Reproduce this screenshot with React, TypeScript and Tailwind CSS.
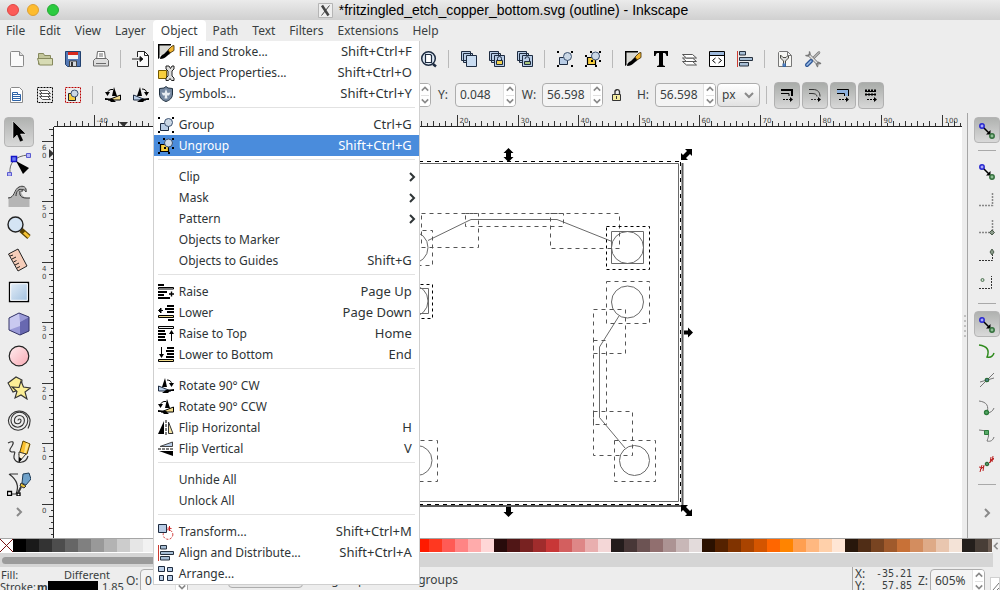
import type { ReactNode } from "react";
import clsx from "clsx";

const NAVY = "#1d2b40";
const BLUE = "#b9cde6";

// 16px icons, shared by the toolbars and the menu
const icons: Record<string, ReactNode> = {
  new: (
    <g fill="#fafafa" stroke="#8a8a8a">
      <path d="M2.500.5h8l4 4v10a1 1 0 0 1-1 1h-11a1 1 0 0 1-1-1v-13a1 1 0 0 1 1-1z" />
      <path d="M10.500.5v4h4" fill="#ddd" />
    </g>
  ),
  open: (
    <g stroke="#86895d">
      <path d="M1.500 13.500v-11h5l1 2h6v4" fill="#c3c69b" />
      <path d="M.5 7.500h15v6.500h-13z" fill="#d7dbb4" />
    </g>
  ),
  save: (
    <g>
      <path d="M.5.5h15v15h-13l-2-2z" fill="#5479b5" stroke="#21416f" />
      <path d="M3 1h10v7H3z" fill="#f4f4f4" />
      <path d="M3 1h10v3H3z" fill="#d8281c" />
      <path d="M4.500 10h7v5.500h-7z" fill="#d5d9df" stroke="#444" />
      <path d="M6 11h2v4H6z" fill="#333" />
    </g>
  ),
  print: (
    <g stroke="#6b6b6b">
      <path d="M4.500.5h7l1 8h-9z" fill="#fff" />
      <path d="M.5 9.500l2-2h11l2 2v5.500H.5z" fill="#dedede" />
      <path d="M6 3h4M6 5h4M3 12.500h10" />
    </g>
  ),
  import: (
    <g fill="none" stroke="#222">
      <path d="M4.500 6V.5h7l4 4v11h-11V10" fill="#fafafa" />
      <path d="M11.500.5v4h4M-1 8h10" />
      <path d="M7 5.500l3 2.500-3 2.500z" fill="#000" />
    </g>
  ),
  zoomPage: (
    <g fill="none" stroke={NAVY} strokeWidth="1.500">
      <circle cx="7.500" cy="7.500" r="6.800" fill="#dfe9f4" />
      <path d="M4.500 3.500h5l1 1v7h-6z" fill="#fff" strokeWidth="1.200" />
      <path d="M12 13l3 2.500" strokeWidth="2.500" />
    </g>
  ),
  duplicate: (
    <g fill={BLUE} stroke={NAVY}>
      <path d="M.5.5h9v9h-9zM2.500 2.500h9v9h-9z" />
      <path d="M5.500 4.500h10v11h-10z" fill="#c9dcf1" />
    </g>
  ),
  clone: (
    <g fill={BLUE} stroke={NAVY}>
      <path d="M.5.5h9v9h-9zM2.500 2.500h9v9h-9z" />
      <path d="M5.500 4.500h10v11h-10z" />
      <path d="M8.500 9V7.500a2 2 0 0 1 4 0V9" fill="none" />
      <path d="M7.500 9.500h6v4h-6z" fill="#f4d44c" />
    </g>
  ),
  unlink: (
    <g fill={BLUE} stroke={NAVY}>
      <path d="M.5.5h9v9h-9zM2.500 2.500h9v9h-9z" />
      <path d="M5.500 4.500h10v11h-10z" />
      <path d="M8 8a2.200 2.200 0 0 1 4.500 0v2" fill="none" />
      <path d="M7.500 10.500h6v3h-6z" fill="#a8c47a" />
    </g>
  ),
  group: (
    <g>
      <path d="M2.500 6.500h8v7h-8z" fill={BLUE} stroke={NAVY} />
      <circle cx="10.500" cy="5.500" r="4" fill="#cbd8e6" stroke="#3c5170" />
      <path d="M0 0h2v2H0zM14 0h2v2h-2zM0 14h2v2H0zM14 14h2v2h-2z" />
    </g>
  ),
  ungroup: (
    <g>
      <path d="M2.500 6.500h8v7h-8z" fill="#f7ce3e" stroke="#000" strokeWidth="1.200" />
      <circle cx="10.500" cy="5" r="4" fill="#cbd8e6" stroke="#3c5170" />
      <path d="M0 4h2v2H0zM5 0h2v2H5zM14 0h2v2h-2zM0 14h2v2H0zM10 14h2v2h-2zM14 9h2v2h-2zM6 9h2v2H6z" />
    </g>
  ),
  fill: (
    <g>
      <path d="M1 1h11v10H1z" fill="#d9d9d4" />
      <path d="M0 0h13v1.500H1.500V14L0 15z" />
      <path d="M2 15c0-3 2-4 4-5l4-4 3 2.500-4 3.500c-2 2-4 3-7 3z" />
      <path d="M10 6l4-4 2-.5v5L12 9z" fill="#f2b632" stroke="#382600" strokeWidth=".8" />
    </g>
  ),
  text: <path d="M1 0h14v5h-1.500C13 2.500 12.500 2 10 2v11c0 1.500.5 1.800 2 2v1H4v-1c1.500-.2 2-.5 2-2V2c-2.500 0-3 .5-3.500 3H1z" />,
  layers: (
    <g fill="#fff" stroke="#555">
      <path d="M1.500 10.500h10l4 3.500h-10z" />
      <path d="M1.500 7h10l4 3.500h-10z" />
      <path d="M1.500 3.500h10l4 3.500h-10z" />
    </g>
  ),
  xml: (
    <g fill="none" stroke="#000">
      <path d="M.5.5h15v15H.5z" fill="#fff" />
      <path d="M1 1h14v3H1z" fill="#9db9dc" stroke="none" />
      <path d="M1 4.500h14M6.500 7L3.500 9.500l3 2.500M9.500 7l3 2.500-3 2.500" />
    </g>
  ),
  align: (
    <g fill="#a7bed5" stroke="#26313e">
      <path d="M.5 0v16" stroke="#cc3b30" />
      <path d="M2.500.5h6v3.500h-6zM2.500 6.500h13v3h-13zM2.500 11.500h9v3.500h-9z" />
    </g>
  ),
  docPrefs: (
    <g fill="none" stroke="#777">
      <path d="M2.500.5h8l4 4v11h-13V1.500z" fill="#f7f7f4" />
      <path d="M3.500 4v3l3 3v5h2v-5l3-3V4l-2.500 2.500h-3z" fill="#ddd" stroke="#4c4c44" />
      <path d="M6 12.500v3h2.500v-3" stroke="#3465a4" fill="#5b86c0" />
      <path d="M10.500.5v4h4" />
    </g>
  ),
  prefs: (
    <g strokeLinecap="round" fill="none">
      <path d="M14 1.500L6 9.500" stroke="#777" strokeWidth="2.500" />
      <path d="M14 1.500L6 9.500" stroke="#e4e4e4" />
      <path d="M4 4l9 9" stroke="#777" strokeWidth="3" />
      <path d="M4 4l9 9" stroke="#e4e4e4" strokeWidth="1.500" />
      <path d="M1 4.500l2 .5 2-2-.5-2M15.500 12.500l-2-1-2 2 1 2" stroke="#777" strokeWidth="1.500" />
      <path d="M6 10l-4 4" stroke="#2c5596" strokeWidth="4" />
      <path d="M6 10l-4 4" stroke="#9fc0ea" strokeWidth="1.500" />
    </g>
  ),
  pageText: (
    <g fill="none" stroke="#8a8a8a">
      <path d="M2.500.5h8l3 3v12h-12v-14z" fill="#fff" />
      <path d="M3.500 5.500h5v2h3v6h-8zM3.500 7.500h5M3.500 9.500h8M3.500 11.500h8" stroke="#2d63a8" />
    </g>
  ),
  selLayers: (
    <g fill="none" stroke="#000">
      <path d="M.5.5h15v15H.5z" strokeDasharray="2 1" />
      <g fill="#fff" stroke="#555">
        <path d="M2.500 9.500h8l3 3h-8z" />
        <path d="M2.500 6.500h8l3 3h-8z" />
        <path d="M2.500 3.500h8l3 3h-8z" />
      </g>
    </g>
  ),
  selShapes: (
    <g fill="none">
      <path d="M.5.5h15v15H.5z" stroke="#b00" strokeDasharray="2 1" />
      <path d="M3.500 6.500h7v7h-7z" fill="#f7ce3e" stroke="#222" />
      <circle cx="9.500" cy="6.500" r="3.500" fill="#cbd8e6" stroke="#3c5170" />
    </g>
  ),
  rotCcw: (
    <g>
      <path d="M9 0l3 9H7z" />
      <path d="M15.500 8v5H3z" fill="#f1dc8e" stroke="#000" />
      <path d="M0 11l8 1 3 3H6l-2-2H0z" />
      <path d="M8 2.500C5 2 3 3.500 2.500 6" fill="none" stroke="#000" />
      <path d="M0 5h5L2.500 9z" />
    </g>
  ),
  rotCw: (
    <g>
      <path d="M7 0L4 9h5z" />
      <path d="M.5 8v5H13z" fill={BLUE} stroke={NAVY} />
      <path d="M16 11l-8 1-4 3h6l2-2h4z" />
      <path d="M9 2c3 0 4.500 1.500 4.500 4" fill="none" stroke="#000" />
      <path d="M11 5h5l-2.500 4z" />
    </g>
  ),
  flipH: (
    <g>
      <path d="M6 1v13H0z" />
      <path d="M8 0v15" stroke="#000" strokeDasharray="3 1" />
      <path d="M10.500 2v11.500h4.500z" fill="#f3e3a5" stroke="#333" />
    </g>
  ),
  flipV: (
    <g>
      <path d="M14.500 1v4.500H2z" fill={BLUE} stroke="#444" />
      <path d="M0 8h16" stroke="#000" strokeDasharray="3 1" />
      <path d="M15 10v5L1 10z" />
    </g>
  ),
  objProps: (
    <g>
      <path d="M.5 5.500h8v8h-8z" fill="#f7ce3e" stroke="#735800" />
      <path d="M8 1v3l2 2v5l-2 2v2.500h2.500l1.500-2 1.500 2H16V13l-2-2V6l2-2V1h-2l-1.500 2.500L11 1z" fill="#ddd" stroke="#222" />
    </g>
  ),
  symbols: (
    <g>
      <path d="M8 .5l2 1.500 4.500.5V8c0 4-3 6.500-6.500 7.500C4.500 14.500 1.500 12 1.500 8V2.500L6 2z" fill="#7487a0" stroke="#20303f" />
      <path d="M8 3l1.500 4 3-.5-1.500 3H9l.5 3h-3l.5-3H5l-1.500-3 3 .5z" fill="#e8edf2" />
    </g>
  ),
  raise: (
    <g>
      <path d="M0 0h6v2H0zM0 7h9v2H0zM0 10h6v2H0zM0 13h12v2H0z" />
      <path d="M.5 3.500h15V5H.5z" fill="#eee" stroke="#000" />
      <path d="M11 10h5M13.500 7.500v5" stroke="#000" strokeWidth="1.400" />
    </g>
  ),
  lower: (
    <g>
      <path d="M9 0h7v2H9zM7 3h9v2H7zM9 6h7v2H9zM10 14h6v2h-6z" />
      <path d="M.5 10.500h15v2H.5z" fill="#f1dc8e" stroke="#000" />
      <path d="M5 5.500H1M3 3L.5 5.500 3 8z" stroke="#000" />
    </g>
  ),
  raiseTop: (
    <g>
      <path d="M.5.5h15v2H.5z" fill="#eee" stroke="#000" />
      <path d="M0 4h7v2H0zM0 7h8v2H0zM0 10h7v2H0zM0 13h8v2H0z" />
      <path d="M13.500 15V5" stroke="#000" />
      <path d="M11 8l2.500-4L16 8z" />
    </g>
  ),
  lowerBottom: (
    <g>
      <path d="M9 0h7v2H9zM8 3h8v2H8zM9 6h7v2H9zM8 9h8v2H8z" />
      <path d="M.5 12.500h15v2H.5z" fill="#f1dc8e" stroke="#000" />
      <path d="M3.500 0v9" stroke="#000" />
      <path d="M1 7l2.500 4L6 7z" />
    </g>
  ),
  transform: (
    <g fill="none">
      <circle cx="10" cy="10.500" r="4.800" stroke="#c22" strokeDasharray="2 1.500" />
      <path d="M.5.5h8v8h-8z" fill={BLUE} stroke={NAVY} />
      <path d="M11.500 2v5M9.500 4l4 .5" stroke="#c22" />
    </g>
  ),
  arrange: (
    <g fill={BLUE} stroke={NAVY}>
      <path d="M.5.5h6v5h-6zM9.500 1.500h5v4h-5zM1.500 9.500h4v5h-4zM9.500 9.500h5v5h-5z" />
    </g>
  ),
  undo: <path d="M14 13c0-6-4-8-9-7V2L0 8l5 5V9c4-1 7 0 9 4z" fill="#e8c33a" stroke="#6b5310" />,
  redo: <path d="M2 13c0-6 4-8 9-7V2l5 6-5 5V9c-4-1-7 0-9 4z" fill="#8fc04a" stroke="#3f6212" />,
  affectStroke: (
    <g fill="none" stroke="#000">
      <path d="M2 3h11v6" strokeWidth="2" />
      <path d="M2 6.500h8V9" />
      <path d="M4 12.500h7" strokeDasharray="2 1" />
      <path d="M11 10l3 2.500-3 2.500z" fill="#000" stroke="none" />
    </g>
  ),
  affectCorner: (
    <g fill="none" stroke="#333">
      <path d="M2 2.500h4c5 0 7 3 7 7M2 6.500h3c3 0 5 1 5 3" />
      <path d="M4 12.500h7" strokeDasharray="2 1" />
      <path d="M11 10l3 2.500-3 2.500z" fill="#000" stroke="none" />
    </g>
  ),
  affectGradient: (
    <g fill="none" stroke="#000">
      <path d="M2 3h11v6h-3V6H2z" fill="#8eb2df" stroke="none" />
      <path d="M2 2.500h11.500V9M2 6.500h7.500V9" />
      <path d="M4 12.500h7" strokeDasharray="2 1" />
      <path d="M11 10l3 2.500-3 2.500z" fill="#000" stroke="none" />
    </g>
  ),
  affectPattern: (
    <g fill="none" stroke="#000">
      <path d="M2 3.500h12M2 7.500h12" strokeWidth="2" strokeDasharray="2 1" />
      <path d="M2 4.500h11M2 7.500h11" />
      <path d="M4 12.500h7" strokeDasharray="2 1" />
      <path d="M11 10l3 2.500-3 2.500z" fill="#000" stroke="none" />
    </g>
  ),
  lock: (
    <g stroke="#333">
      <path d="M6 7V5.500a2 2 0 0 1 4.500-1V7" fill="none" strokeWidth="1.300" />
      <path d="M3.500 7.500h8v6h-8z" fill="#f3eba0" />
      <path d="M7.500 9v3" />
    </g>
  ),
  // snapping
  snap: (
    <g>
      <path d="M4 5l6 6" stroke="#000" strokeWidth="1.500" />
      <path d="M11.500 8v4.500H7z" />
      <circle cx="3" cy="4" r="2.200" fill="#a9a9f8" stroke="#2929cf" strokeWidth="1.500" />
      <circle cx="13" cy="14" r="2.200" fill="#8fbf95" stroke="#33703c" strokeWidth="1.500" />
    </g>
  ),
  snapEdge: <path d="M0 14.500h13.500V1" fill="none" stroke="#888" strokeWidth="1.500" strokeDasharray="2 1" />,
  snapCorner: (
    <g>
      <path d="M0 13.500h13.500V0" fill="none" stroke="#888" strokeWidth="1.500" strokeDasharray="2 1" />
      <path d="M13 11l2.500 2.500L13 16l-2.500-2.500z" fill="#8a9a8a" stroke="#4c5d4c" />
    </g>
  ),
  snapMid: (
    <g>
      <path d="M0 13.500h13.500V3" fill="none" stroke="#333" strokeDasharray="2 1" />
      <path d="M13 2l2 3-2 3-2-3z" fill="#8a9a8a" stroke="#4c5d4c" />
    </g>
  ),
  snapCenter: (
    <g>
      <path d="M0 13.500h12.500V1" fill="none" stroke="#333" strokeDasharray="2 1" />
      <circle cx="3.500" cy="5" r="1.500" fill="#cde0cf" stroke="#4c6d50" />
    </g>
  ),
  snapPath: <path d="M0 1c8 1 11 5 8 12 4 1 6-1 7-4" fill="none" stroke="#2e8a1c" strokeWidth="1.500" />,
  snapCross: (
    <g fill="none" stroke="#777">
      <path d="M1 15L15 1M1 10l14-4" />
      <circle cx="8" cy="8" r="1.700" fill="#4f83a0" stroke="#2b6b35" strokeWidth="1.300" />
    </g>
  ),
  snapCusp: (
    <g fill="none" stroke="#777">
      <path d="M0 1c8 1 10 5 8 12 3 0 6-2 7-5" />
      <circle cx="7.500" cy="12.500" r="2" fill="#58a868" stroke="#2b7b3a" strokeWidth="1.300" />
    </g>
  ),
  snapSmooth: (
    <g fill="none" stroke="#777">
      <path d="M0 2l8 1c3 3 1 7 0 10 4 1 6-1 7-4" />
      <path d="M5.500 2.500h4v4h-4z" fill="#58a868" stroke="#2b7b3a" />
    </g>
  ),
  snapLine: (
    <g fill="none" stroke="#b22">
      <path d="M0 11l5 1M1 14l4-4M3 9l-2 7M5 9l-1 6M11 4l4-1M10 7l5-5M12 1l-1 6M14 0l-1 6" />
      <circle cx="8" cy="8" r="1.800" fill="#4f9060" stroke="#1f5b2a" />
    </g>
  ),
};

// 24px icons of the toolbox
const toolIcons: Record<string, ReactNode> = {
  Select: <path d="M6 1v18l4-4 3 7 3.500-1.500-3-6.500H19z" stroke="#fff" strokeWidth=".5" />,
  Node: (
    <g>
      <path d="M3 21C2 11 8 4 21 3" fill="none" stroke="#666" />
      <path d="M4.500 4.500h5v5h-5z" fill="#6b7cf0" stroke="#1515c8" strokeWidth="1.500" />
      <path d="M19.500 1.500h4v4h-4zM.5 20.500h4v3.500h-4z" fill="#b6b6f4" stroke="#5b5bd0" />
      <path d="M9 9l13 7-6 6z" />
    </g>
  ),
  Tweak: (
    <g fill="none" stroke="#333">
      <path d="M1.500 23v-9c7 0 6-9 11-11 4-1 7 1 7 4-2-2-6-1-5 2 1 3 3 5 8 5v9z" fill="#b5b5b5" stroke="none" />
      <path d="M1 14c7 0 6-9 11-11 4-2 8 0 7 5-1-3-5-3-4 0M9 12c0-5 3-8 7-6M23 14h-4c-5 0-7-3-6-7" />
    </g>
  ),
  Zoom: (
    <g>
      <path d="M14 14l8 7" stroke="#5b4300" strokeWidth="5" />
      <path d="M17 16.500l5 4.500" stroke="#f7c334" strokeWidth="3" />
      <circle cx="8.500" cy="8.500" r="7.500" fill="#d4e4f4" stroke="#222" strokeWidth="1.400" />
    </g>
  ),
  Measure: (
    <g stroke="#222">
      <path d="M1.500 6L11 1l9 17-9 5z" fill="#f6cdb9" />
      <path d="M3 8l3-1M5 11l4-2M6.500 14l3-1.500M8 17l4-2M10 20l3-1.500" />
    </g>
  ),
  Rectangle: (
    <g>
      <defs>
        <linearGradient id="rectFill" x1="0" y1="0" x2="1" y2="1">
          <stop offset="0" stopColor="#e6eff8" />
          <stop offset="1" stopColor="#9fbfdf" />
        </linearGradient>
      </defs>
      <path d="M2.500 2.500h19v19h-19z" fill="url(#rectFill)" stroke="#000" strokeWidth="1.300" />
      <path d="M3.700 3.700h16.600v16.600H3.700z" fill="none" stroke="#fff" />
    </g>
  ),
  "3D Box": (
    <g stroke="#333366">
      <path d="M2 6l10-5 10 4v14l-9 4-11-5z" fill="#9a9ad8" stroke="none" />
      <path d="M2 6l10-5 1 9 9-5v13l-9-4-11 4z" fill="#c9c9f0" stroke="none" />
      <path d="M13 10l9-5v14l-9 4z" fill="#6868b0" stroke="none" />
      <path d="M2 6l10-5 10 4v14l-9 4-11-5z" fill="none" />
    </g>
  ),
  Ellipse: (
    <g>
      <defs>
        <linearGradient id="ellipseFill" x1="0" y1="0" x2="1" y2="1">
          <stop offset="0" stopColor="#ffeef0" />
          <stop offset="1" stopColor="#f8aab4" />
        </linearGradient>
      </defs>
      <circle cx="12" cy="12" r="9.800" fill="url(#ellipseFill)" stroke="#222" strokeWidth="1.200" />
    </g>
  ),
  Star: (
    <g fill="#fbee96" stroke="#333" strokeWidth="1.100">
      <path d="M1 7l8-6 6 3-1 9-8 3z" />
      <path d="M14 5l2.500 6 7 1-5.500 4 2 7-6-4-6 3 2-6.500-5-4.500 7 .5z" />
    </g>
  ),
  Spiral: (
    <path
      d="M11 12.500a1.500 1.500 0 0 1 3 0a3.300 3.300 0 0 1-6.600 0a5 5 0 0 1 10 0a6.700 6.700 0 0 1-13.400 0a8.400 8.400 0 0 1 16.800 0a9.700 9.700 0 0 1-19.400 0a11 11 0 0 1 21.600-1c.5 4-.5 6-2 9"
      fill="none"
      stroke="#333"
      strokeWidth="1.100"
    />
  ),
  Pencil: (
    <g>
      <path d="M1 3c4-2 7-2 4 3-3 4-3 6 1 6 4-1 0 3 1 6 2 6 12 6 14-2" fill="none" stroke="#333" strokeWidth="1.200" />
      <path d="M16 1l7 3-3 10-8 1z" fill="#fbc02d" stroke="#5b4300" />
      <path d="M19 3l3 1-3 9h-2z" fill="#fde58a" />
      <path d="M12 12l7 2-7 8z" fill="#fff3d6" stroke="#333" />
      <path d="M12 17l3 2-3 3z" />
    </g>
  ),
  Bezier: (
    <g>
      <path d="M3 2h8M2 2c7 5 11 11 7 20H3" fill="none" stroke="#333" strokeWidth="1.200" />
      <path d="M.5 19.500h4v4h-4zM10 21h3v3h-3z" fill="#fff" stroke="#000" strokeWidth="1.300" />
      <path d="M16 2l6-1 2 6-5 6-4-2z" fill="#6fa1c9" stroke="#1f3d58" />
      <path d="M14 11l5 3-2 2-4-2z" fill="#e8c33a" stroke="#333" />
      <path d="M14 15l-3 6" stroke="#333" strokeWidth="2" />
    </g>
  ),
};

function Icon({ name }: { name: string }) {
  return (
    <svg width="16" height="16" viewBox="0 0 16 16" className="shrink-0 overflow-visible" aria-hidden="true">
      {icons[name]}
    </svg>
  );
}

function Chevron({ className, d }: { className?: string; d: string }) {
  return (
    <svg width="10" height="10" viewBox="0 0 10 10" className={clsx("shrink-0", className)} aria-hidden="true">
      <path d={d} fill="none" stroke="currentColor" strokeWidth="2" />
    </svg>
  );
}

const UP = "M1 7l4-4 4 4";
const DOWN = "M1 3l4 4 4-4";
const RIGHT = "M3 1l4 4-4 4";
const LEFT = "M7 1L3 5l4 4";

const menus = ["File", "Edit", "View", "Layer", "Object", "Path", "Text", "Filters", "Extensions", "Help"];

type Item = { label: string; icon?: string; keys?: string; sub?: boolean; active?: boolean };

const objectMenu: Item[][] = [
  [
    { label: "Fill and Stroke...", icon: "fill", keys: "Shift+Ctrl+F" },
    { label: "Object Properties...", icon: "objProps", keys: "Shift+Ctrl+O" },
    { label: "Symbols...", icon: "symbols", keys: "Shift+Ctrl+Y" },
  ],
  [
    { label: "Group", icon: "group", keys: "Ctrl+G" },
    { label: "Ungroup", icon: "ungroup", keys: "Shift+Ctrl+G", active: true },
  ],
  [
    { label: "Clip", sub: true },
    { label: "Mask", sub: true },
    { label: "Pattern", sub: true },
    { label: "Objects to Marker" },
    { label: "Objects to Guides", keys: "Shift+G" },
  ],
  [
    { label: "Raise", icon: "raise", keys: "Page Up" },
    { label: "Lower", icon: "lower", keys: "Page Down" },
    { label: "Raise to Top", icon: "raiseTop", keys: "Home" },
    { label: "Lower to Bottom", icon: "lowerBottom", keys: "End" },
  ],
  [
    { label: "Rotate 90° CW", icon: "rotCw" },
    { label: "Rotate 90° CCW", icon: "rotCcw" },
    { label: "Flip Horizontal", icon: "flipH", keys: "H" },
    { label: "Flip Vertical", icon: "flipV", keys: "V" },
  ],
  [{ label: "Unhide All" }, { label: "Unlock All" }],
  [
    { label: "Transform...", icon: "transform", keys: "Shift+Ctrl+M" },
    { label: "Align and Distribute...", icon: "align", keys: "Shift+Ctrl+A" },
    { label: "Arrange...", icon: "arrange" },
  ],
];

const commandBar = [
  ["new", "open", "save", "print"],
  ["import", "import"],
  ["undo", "redo"],
  ["duplicate", "clone", "unlink"],
  ["zoomPage", "zoomPage", "zoomPage"],
  ["duplicate", "clone", "unlink"],
  ["group", "ungroup"],
  ["fill", "text", "layers", "xml", "align"],
  ["docPrefs", "prefs"],
];

const selectBar = [
  ["pageText", "selLayers", "selShapes"],
  ["rotCcw", "rotCw", "flipH", "flipV"],
  ["lowerBottom", "lower", "raise", "raiseTop"],
];

const snapBar = [
  ["snap"],
  ["snap", "snapEdge", "snapCorner", "snapMid", "snapCenter"],
  ["snap", "snapPath", "snapCross", "snapCusp", "snapSmooth", "snapLine"],
];

const palette = [
  "#000000", "#1a1a1a", "#333333", "#4d4d4d", "#666666", "#808080", "#999999", "#b3b3b3", "#cccccc", "#e6e6e6",
  "#f2f2f2", "#f9f9f9", "#ffffff", "#800000", "#ff0000", "#808000", "#ffff00", "#008000", "#00ff00", "#008080",
  "#00ffff", "#000080", "#0000ff", "#800080", "#ff00ff", "#2b0000", "#550000", "#800000", "#aa0000", "#d40000",
  "#ff0000", "#ff1a00", "#ff3820", "#ff5b55", "#ff8484", "#ffabab", "#ffd7d7", "#280b0b", "#501616", "#782221",
  "#a02c2c", "#c83737", "#d35f5f", "#de8787", "#e9afaf", "#f4d7d7", "#241c1c", "#483737", "#6c5353", "#916f6f",
  "#ac9393", "#c8b7b7", "#e3dbdb", "#2b1100", "#552200", "#803300", "#aa4400", "#d45500", "#ff6600", "#ff8400",
  "#ff9f50", "#ffb880", "#ffd0aa", "#ffe6d5", "#28170b", "#502d16", "#784421", "#a05a2c", "#c87137", "#d38d5f",
  "#deaa87", "#e9c6af", "#f4e3d7", "#241f1c", "#483e37", "#6c5d53",
];

function ToolGroups({ groups }: { groups: string[][] }) {
  return groups.map((group, i) => (
    <div key={i} className="flex shrink-0 items-center">
      {i > 0 && <div className="mr-1.5 ml-[5px] h-[18px] w-px bg-[#b9b9b9]" />}
      {group.map((name, j) => (
        <button key={j} type="button" aria-label={name} className="flex h-7 w-7 items-center justify-center">
          <Icon name={name} />
        </button>
      ))}
    </div>
  ));
}

function Spin({ id, value, className }: { id: string; value: string; className: string }) {
  return (
    <div className={clsx("flex h-6 shrink-0 overflow-hidden rounded border border-[#adadad] bg-[#f4f4f4]", className)}>
      <input id={id} defaultValue={value} className="w-0 min-w-0 flex-1 bg-transparent pl-1 text-xs outline-none" />
      <div className="flex w-3 flex-col items-center border-l border-[#e2e2e2] bg-white text-[#8a8a8a]">
        <button type="button" aria-label="Increase" className="flex flex-1 items-center border-b border-[#e2e2e2]">
          <Chevron d={UP} className="w-2" />
        </button>
        <button type="button" aria-label="Decrease" className="flex flex-1 items-center">
          <Chevron d={DOWN} className="w-2" />
        </button>
      </div>
    </div>
  );
}

function ObjectMenu() {
  return (
    <div
      role="menu"
      className="absolute top-full left-0 z-50 w-[267px] border-r border-b border-l border-[#cfcfcf] bg-white text-[#2e3436]"
    >
      {objectMenu.map((section, i) => (
        <div key={i}>
          {i > 0 && (
            <div className="h-[10px] px-1 pt-[3px]">
              <div className="h-px bg-[#e2e2e2]" />
            </div>
          )}
          {section.map((item) => (
            <button
              key={item.label}
              type="button"
              role="menuitem"
              className={clsx(
                "flex h-[21px] w-full items-center pl-1 text-left text-xs",
                item.sub ? "pr-0.5" : "pr-[7px]",
                item.active && "bg-[#4a8cdc] text-white"
              )}
            >
              <span className="mr-[5px] w-4">{item.icon && <Icon name={item.icon} />}</span>
              <span className="flex-1">{item.label}</span>
              {item.keys && <span className="text-[13px]">{item.keys}</span>}
              {item.sub && <Chevron d={RIGHT} />}
            </button>
          ))}
        </div>
      ))}
    </div>
  );
}

const UNIT = 6.055; // pixels per document unit at 605%

function TopRuler() {
  const ticks = Array.from({ length: 150 }, (_, i) => i - 46);
  return (
    <svg className="h-[14px] w-full shrink-0 font-['DejaVu_Sans',sans-serif]" aria-hidden="true">
      {ticks.map((n) => {
        const x = Math.round(283 + n * UNIT) - 0.5;
        return (
          <g key={n}>
            <path d={`M${x} ${n % 10 === 0 ? 2 : n % 2 === 0 ? 8 : 10}V13`} stroke="#333" />
            {n % 10 === 0 && (
              <text x={x + 2} y="10" fontSize="7" fill="#444">
                {n}
              </text>
            )}
          </g>
        );
      })}
      <path d="M0 13.500H2000" stroke="#222" />
      <path d="M65 9h9l-4.500 5z" fill="#333" />
    </svg>
  );
}

function SideRuler() {
  const ticks = Array.from({ length: 69 }, (_, i) => i - 6);
  return (
    <svg className="w-[13px] flex-1 font-['DejaVu_Sans',sans-serif]" aria-hidden="true">
      {ticks.map((n) => {
        const y = Math.round(377 - n * UNIT) + 0.5;
        return (
          <g key={n}>
            <path d={`M${n % 10 === 0 ? 1 : n % 2 === 0 ? 8 : 10} ${y}H13`} stroke="#333" />
            {n % 10 === 0 &&
              String(n)
                .split("")
                .map((digit, i) => (
                  <text key={i} x="1" y={y + 8 + i * 8} fontSize="7" fill="#444">
                    {digit}
                  </text>
                ))}
          </g>
        );
      })}
      <path d="M12.500 0V2000" stroke="#222" />
      <path d="M8 22v9l5-4.500z" fill="#333" />
    </svg>
  );
}

// Bounding boxes of the selected traces and pads: x, y, width, height
const boxes = [
  [421.5, 213.5, 57, 34],
  [465.5, 213.5, 98, 13],
  [550.5, 213.5, 69, 35],
  [390.5, 230.5, 42, 35],
  [606.5, 281.5, 43, 42],
  [593.5, 309.5, 32, 44],
  [593.5, 340.5, 13, 84],
  [593.5, 411.5, 39, 44],
  [614.5, 440.5, 41, 41],
  [396.5, 440.5, 41, 41],
];

function Canvas() {
  return (
    <svg className="h-full w-full" aria-label="Drawing">
      <g transform="translate(-54 -127)" fill="none">
        <g stroke="#6a6a6a">
          <path d="M163.500 163.500H678.500V501.500H163.500z" />
          <path d="M428 240.500L471 219.500H557L612 241.500M619 316L599.500 347V417.500L625 448" />
          <path d="M611.500 231.500h32v32h-32zM396.500 288.500h32v25h-32z" />
          <circle cx="627.500" cy="247.500" r="16" />
          <circle cx="627.500" cy="302" r="16" />
          <circle cx="634.500" cy="460.500" r="15" />
          <circle cx="412" cy="247.500" r="16" />
          <circle cx="412" cy="301" r="16" />
          <circle cx="417" cy="460.500" r="15" />
        </g>
        <g stroke="#555" strokeDasharray="4 4">
          {boxes.map(([x, y, w, h], i) => (
            <rect key={i} x={x} y={y} width={w} height={h} />
          ))}
        </g>
        <g stroke="#000" strokeDasharray="3 3">
          <rect x="606.500" y="226.500" width="43" height="43" />
          <rect x="390.500" y="284.500" width="42" height="34" />
        </g>
        <path d="M682.500 163V506M164 506H683.500" stroke="#5c5c5c" strokeWidth="2" />
        <path d="M163 161.500H681" stroke="#000" strokeDasharray="4 4" />
        <path d="M680.500 162V504.500H163" stroke="#000" strokeDasharray="4 4" />
        <g fill="#000">
          <path d="M508.500 148l5 5h-2.500v4h2.500l-5 5-5-5h2.500v-4h-2.500z" />
          <path d="M692 149v7l-2-2-4 4 2 2h-7v-7l2 2 4-4-2-2z" />
          <path d="M693 332.500l-5 5v-3h-4v-4h4v-3z" />
          <path d="M508.500 517l-5-5h2.500v-5h5v5h2.500z" />
          <path d="M692 516h-7l2-2-4-4-2 2v-7h7l-2 2 4 4 2-2z" />
        </g>
      </g>
    </svg>
  );
}

export default function App() {
  return (
    <div className="flex h-screen flex-col overflow-hidden bg-[#ededed] font-['Noto_Sans',sans-serif] text-xs text-[#3a3f41]">
      <header className="flex h-5 shrink-0 items-center bg-linear-to-b from-[#ebebeb] to-[#d0d0d0]">
        <div className="flex w-[60px] gap-2 pl-[7px]">
          <button type="button" aria-label="Close" className="h-3 w-3 rounded-full border border-[#df4744] bg-[#fc5b57]" />
          <button type="button" aria-label="Minimize" className="h-3 w-3 rounded-full border border-[#dea034] bg-[#fdbc2e]" />
          <button type="button" aria-label="Zoom" className="h-3 w-3 rounded-full border border-[#27aa35] bg-[#2bcb3f]" />
        </div>
        <h1 className="flex flex-1 items-center justify-center gap-1.5 pr-[54px] font-['Liberation_Sans',sans-serif] text-sm text-black">
          <svg width="15" height="15" viewBox="0 0 15 15" aria-hidden="true">
            <path d="M.5.5h14v14H.5z" fill="#eee" stroke="#b5b5b5" />
            <path d="M4 2.500l6.500 10" stroke="#444" strokeWidth="2.500" />
            <path d="M11.500 2.500l-8 10" stroke="#444" />
          </svg>
          *fritzingled_etch_copper_bottom.svg (outline) - Inkscape
        </h1>
      </header>

      <nav className="-ml-px flex h-[21px] shrink-0">
        {menus.map((name) => (
          <div key={name} className="relative">
            <button
              type="button"
              className={clsx("h-full", name === "Object" ? "rounded-t bg-white px-2" : "px-[7px]")}
            >
              {name}
            </button>
            {name === "Object" && <ObjectMenu />}
          </div>
        ))}
      </nav>

      <div className="flex h-9 shrink-0 items-center pl-[3px]">
        <ToolGroups groups={commandBar} />
      </div>

      <div className="flex h-9 shrink-0 items-center pl-[3px]">
        <ToolGroups groups={selectBar} />
        <label htmlFor="x" className="w-[35px] pr-2 text-right">X:</label>
        <Spin id="x" value="0.048" className="w-[61px]" />
        <label htmlFor="y" className="w-6 text-center">Y:</label>
        <Spin id="y" value="0.048" className="w-[61px]" />
        <label htmlFor="w" className="w-[26px] text-center">W:</label>
        <Spin id="w" value="56.598" className="w-[61px]" />
        <button type="button" aria-label="Lock ratio" className="flex w-7 justify-center">
          <Icon name="lock" />
        </button>
        <label htmlFor="h" className="w-6 text-center">H:</label>
        <Spin id="h" value="56.598" className="w-[61px]" />
        <div className="relative ml-px flex w-[43px] items-center">
          <select
            aria-label="Unit"
            className="h-6 w-full appearance-none rounded border border-[#adadad] bg-linear-to-b from-white to-[#e2e2e2] pl-1 text-xs"
          >
            <option>px</option>
            <option>mm</option>
          </select>
          <Chevron d={DOWN} className="pointer-events-none absolute right-1.5 text-[#8a8a8a]" />
        </div>
        <div className="mr-[7px] ml-[6px] h-[18px] w-px bg-[#b9b9b9]" />
        <div className="flex gap-0.5">
          {["affectStroke", "affectCorner", "affectGradient", "affectPattern"].map((name) => (
            <button
              key={name}
              type="button"
              aria-label={name}
              aria-pressed="true"
              className="flex h-[27px] w-[26px] items-center justify-center rounded border border-[#b0b0b0] bg-linear-to-b from-[#a9aca9] to-[#d8d8d8]"
            >
              <Icon name={name} />
            </button>
          ))}
        </div>
      </div>

      <main className="flex min-h-0 flex-1">
        <aside className="flex w-[41px] shrink-0 flex-col items-start pt-[3px] pl-1">
          {Object.keys(toolIcons).map((name) => (
            <button
              key={name}
              type="button"
              aria-label={name}
              className={clsx(
                "my-px flex h-[30px] w-[30px] shrink-0 items-center justify-center rounded",
                name === "Select" && "border border-[#b5b5b5] bg-linear-to-b from-[#b0b2b0] to-[#d9d9d9]"
              )}
            >
              <svg width="24" height="24" viewBox="0 0 24 24" aria-hidden="true">
                {toolIcons[name]}
              </svg>
            </button>
          ))}
          <button type="button" aria-label="More tools" className="flex h-6 w-[30px] items-center justify-center text-[#8a8a8a]">
            <Chevron d={RIGHT} />
          </button>
        </aside>
        <div className="flex w-[13px] shrink-0 flex-col pt-[14px]">
          <SideRuler />
        </div>
        <div className="flex min-w-0 flex-1 flex-col">
          <TopRuler />
          <div className="min-h-0 flex-1 bg-white">
            <Canvas />
          </div>
        </div>
        <div className="flex w-[6px] shrink-0 flex-col items-center justify-center gap-[3px] border-r border-[#a5a5a5]">
          {[0, 1, 2, 3, 4].map((n) => (
            <span key={n} className="h-0.5 w-0.5 bg-[#c0c0c0]" />
          ))}
        </div>
        <aside className="flex w-8 shrink-0 flex-col items-end pt-[3px]">
          {snapBar.map((group, i) => (
            <div key={i} className="flex flex-col">
              {i > 0 && (
                <div className="h-[13px] px-1 pt-1.5">
                  <div className="h-px bg-[#a9a9a9]" />
                </div>
              )}
              {group.map((name, j) => (
                <button
                  key={j}
                  type="button"
                  aria-label={name}
                  className={clsx(
                    "my-px flex h-[26px] w-[26px] items-center justify-center",
                    j === 0 && i !== 1 && "rounded border border-[#b5b5b5] bg-linear-to-b from-[#b0b2b0] to-[#d9d9d9]"
                  )}
                >
                  <Icon name={name} />
                </button>
              ))}
            </div>
          ))}
          <div className="h-[13px] w-[26px] px-1 pt-1.5">
            <div className="h-px bg-[#a9a9a9]" />
          </div>
          <button type="button" aria-label="More snapping" className="flex h-11 w-[26px] items-center justify-center text-[#8a8a8a]">
            <Chevron d={RIGHT} />
          </button>
        </aside>
      </main>

      <div className="flex h-[15px] shrink-0 border-t border-[#a5a5a5]">
        <div className="flex min-w-0 flex-1 overflow-hidden border-b border-white">
          <button type="button" aria-label="None" className="w-[13px] shrink-0 bg-white">
            <svg width="13" height="13" viewBox="0 0 13 13" aria-hidden="true">
              <path d="M0 0l13 13M13 0L0 13" stroke="#7a1414" />
            </svg>
          </button>
          {palette.map((color, i) => (
            <button key={i} type="button" aria-label={color} className="w-[13px] shrink-0" style={{ backgroundColor: color }} />
          ))}
        </div>
        <button type="button" aria-label="Palette menu" className="flex w-2 items-center justify-center text-[#8a8a8a]">
          <Chevron d={LEFT} className="w-2" />
        </button>
      </div>

      <div className="mr-[7px] flex h-[14px] shrink-0 items-center bg-[#d5d5d5] pl-0.5">
        <div className="h-[7px] w-1/3 rounded-full bg-[#9b9b9b]" />
      </div>

      <footer className="flex h-[23px] shrink-0 items-start overflow-hidden">
        <div className="grid w-[122px] shrink-0 grid-cols-[48px_50px_24px] pt-0.5 text-[11px] leading-3">
          <span className="pl-px">Fill:</span>
          <span className="col-span-2 pl-4">Different</span>
          <span className="flex gap-px whitespace-nowrap">
            Stroke:<b>m</b>
          </span>
          <span className="h-3 bg-black" />
          <span className="pl-1">1.85</span>
        </div>
        <label htmlFor="opacity" className="w-[18px] pt-1.5 pl-1 leading-4">O:</label>
        <Spin id="opacity" value="0" className="mt-0.5 w-12" />
        <select
          aria-label="Layer"
          className="mt-[-3px] ml-10 h-6 w-[75px] shrink-0 appearance-none rounded border border-[#adadad] bg-[#e6e6e6] pl-2.5 text-xs"
        >
          <option>(root)</option>
        </select>
        <p className="flex-1 truncate pt-[5px] pl-3 leading-4">Ungroup selected groups</p>
        <dl className="grid w-[66px] shrink-0 grid-cols-[19px_36px] gap-x-0.5 border-l border-[#a5a5a5] pt-px pl-0.5 leading-3">
          <dt>X:</dt>
          <dd className="text-right font-['DejaVu_Sans_Mono',monospace] text-[10px]">-35.21</dd>
          <dt>Y:</dt>
          <dd className="text-right font-['DejaVu_Sans_Mono',monospace] text-[10px]">57.85</dd>
        </dl>
        <label htmlFor="zoom" className="w-3 pt-1.5 leading-4">Z:</label>
        <Spin id="zoom" value="605%" className="mt-0.5 w-[55px]" />
        <div className="mt-2.5 ml-[5px] h-4 w-2.5 shrink-0 border border-[#d0d0d0] bg-white">
          <svg width="8" height="12" viewBox="0 0 8 12" aria-hidden="true">
            <path d="M2 12l6-7M6 12l2-2" stroke="#777" />
          </svg>
        </div>
      </footer>
    </div>
  );
}
